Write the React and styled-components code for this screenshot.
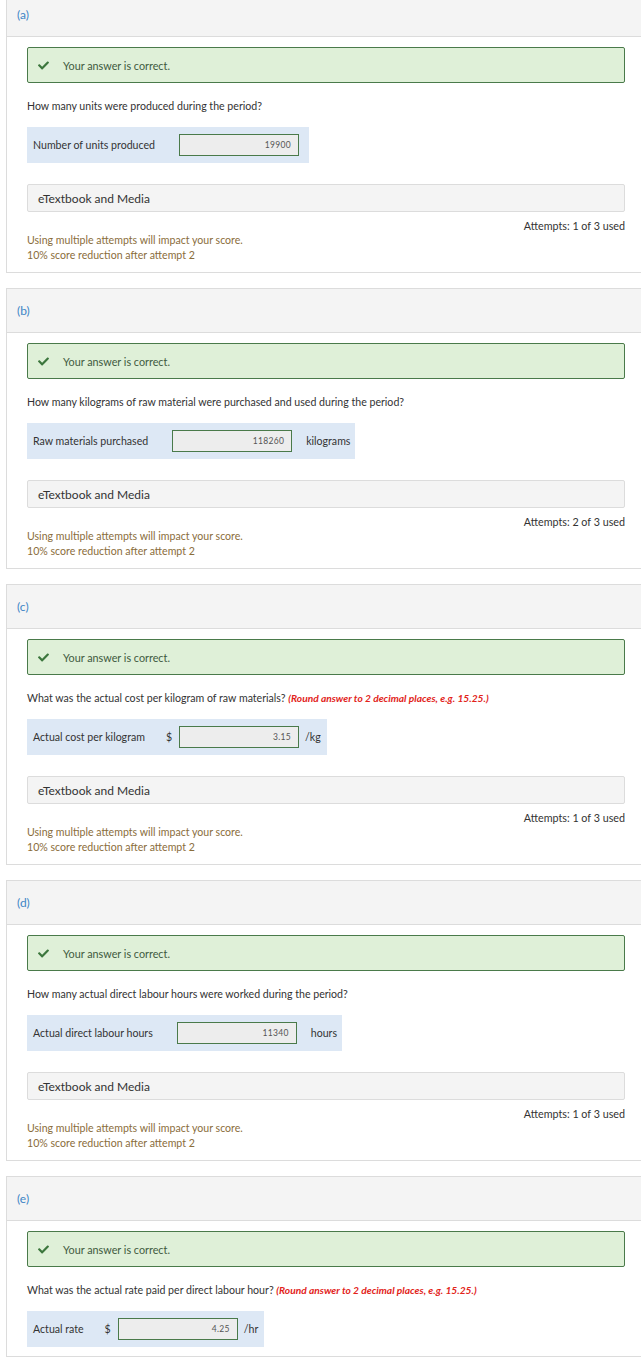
import React from "react";
import styled, { createGlobalStyle } from "styled-components";
import { FaCheck } from "react-icons/fa";

const GlobalStyle = createGlobalStyle`
  html, body {
    margin: 0;
    padding: 0;
    background: #fff;
    overflow-x: hidden;
  }
  body {
    font-family: Lato, "Open Sans", "Liberation Sans", sans-serif;
    color: #333;
  }
`;

const Page = styled.div`
  width: 641px;
`;

const Panel = styled.section`
  margin: 0 0 15px 6px;
  border: 1px solid #dcdcdc;
  border-right: none;
  background: #fff;

  &:first-child {
    margin-top: -8px;
  }
`;

const Header = styled.div`
  height: 43px;
  display: flex;
  align-items: center;
  padding-left: 10px;
  background: #f4f4f4;
  border-bottom: 1px solid #dcdcdc;
  font-size: 12px;
  color: #3d85c6;
`;

const Body = styled.div`
  padding: 10px 16px 9px 20px;
`;

const Success = styled.div`
  height: 36px;
  box-sizing: border-box;
  display: flex;
  align-items: center;
  padding-left: 10px;
  gap: 14px;
  background: #dff0d8;
  border: 1px solid #4a7a4a;
  border-radius: 2px;
  font-size: 10.8px;
  color: #3e5a3e;
`;

const Question = styled.p`
  margin: 16px 0 0;
  font-size: 10.6px;
  line-height: 14px;
  color: #333;
  white-space: nowrap;
`;

const Hint = styled.span`
  color: #e2231a;
  font-weight: 700;
  font-style: italic;
  font-size: 10.2px;
`;

const AnswerRow = styled.div`
  margin-top: 14px;
  height: 36px;
  display: inline-flex;
  align-items: center;
  padding: 0 ${(p) => p.$padRight}px 0 6px;
  background: #dde8f5;
  font-size: 10.6px;
  color: #333;
`;

const Label = styled.span`
  margin-right: ${(p) => p.$gap}px;
  white-space: nowrap;
`;

const Currency = styled.span`
  margin-right: 7px;
`;

const Field = styled.div`
  width: 120px;
  height: 22px;
  box-sizing: border-box;
  display: flex;
  align-items: center;
  justify-content: flex-end;
  padding-right: 7px;
  background: #ededed;
  border: 1px solid #4a7a4a;
  font-size: 8.5px;
  color: #555;
  letter-spacing: 0.3px;
`;

const Unit = styled.span`
  margin-left: ${(p) => p.$gap}px;
  white-space: nowrap;
`;

const Media = styled.div`
  margin-top: 21px;
  height: 28px;
  box-sizing: border-box;
  display: flex;
  align-items: center;
  padding-left: 10px;
  background: #f4f4f4;
  border: 1px solid #dcdcdc;
  border-radius: 2px;
  font-size: 12px;
  color: #333;
`;

const Attempts = styled.div`
  margin-top: 6px;
  text-align: right;
  font-size: 10.75px;
  line-height: 15px;
  color: #333;
`;

const Warning = styled.div`
  font-size: 10.6px;
  line-height: 15px;
  color: #8a6d3b;
`;

const parts = [
  {
    id: "a",
    question: "How many units were produced during the period?",
    label: "Number of units produced",
    value: "19900",
    attempts: "Attempts: 1 of 3 used",
  },
  {
    id: "b",
    question: "How many kilograms of raw material were purchased and used during the period?",
    label: "Raw materials purchased",
    value: "118260",
    unit: "kilograms",
    attempts: "Attempts: 2 of 3 used",
  },
  {
    id: "c",
    question: "What was the actual cost per kilogram of raw materials?",
    hint: true,
    label: "Actual cost per kilogram",
    currency: true,
    value: "3.15",
    unit: "/kg",
    attempts: "Attempts: 1 of 3 used",
  },
  {
    id: "d",
    question: "How many actual direct labour hours were worked during the period?",
    label: "Actual direct labour hours",
    value: "11340",
    unit: "hours",
    attempts: "Attempts: 1 of 3 used",
  },
  {
    id: "e",
    question: "What was the actual rate paid per direct labour hour?",
    hint: true,
    label: "Actual rate",
    currency: true,
    value: "4.25",
    unit: "/hr",
  },
];

function Part({ part }) {
  const slashUnit = part.unit && part.unit.startsWith("/");
  return (
    <Panel>
      <Header>({part.id})</Header>
      <Body>
        <Success>
          <FaCheck size={11} color="#3c763d" />
          <span>Your answer is correct.</span>
        </Success>
        <Question>
          {part.question}
          {part.hint && (
            <>
              {" "}
              <Hint>(Round answer to 2 decimal places, e.g. 15.25.)</Hint>
            </>
          )}
        </Question>
        <AnswerRow $padRight={part.unit ? (slashUnit ? 6 : 5) : 10}>
          <Label $gap={part.currency ? 21 : 24}>{part.label}</Label>
          {part.currency && <Currency>$</Currency>}
          <Field>{part.value}</Field>
          {part.unit && <Unit $gap={slashUnit ? 6 : 14}>{part.unit}</Unit>}
        </AnswerRow>
        {part.attempts && (
          <>
            <Media>eTextbook and Media</Media>
            <Attempts>{part.attempts}</Attempts>
            <Warning>
              Using multiple attempts will impact your score.
              <br />
              10% score reduction after attempt 2
            </Warning>
          </>
        )}
      </Body>
    </Panel>
  );
}

export default function App() {
  return (
    <>
      <GlobalStyle />
      <Page>
        {parts.map((p) => (
          <Part key={p.id} part={p} />
        ))}
      </Page>
    </>
  );
}
